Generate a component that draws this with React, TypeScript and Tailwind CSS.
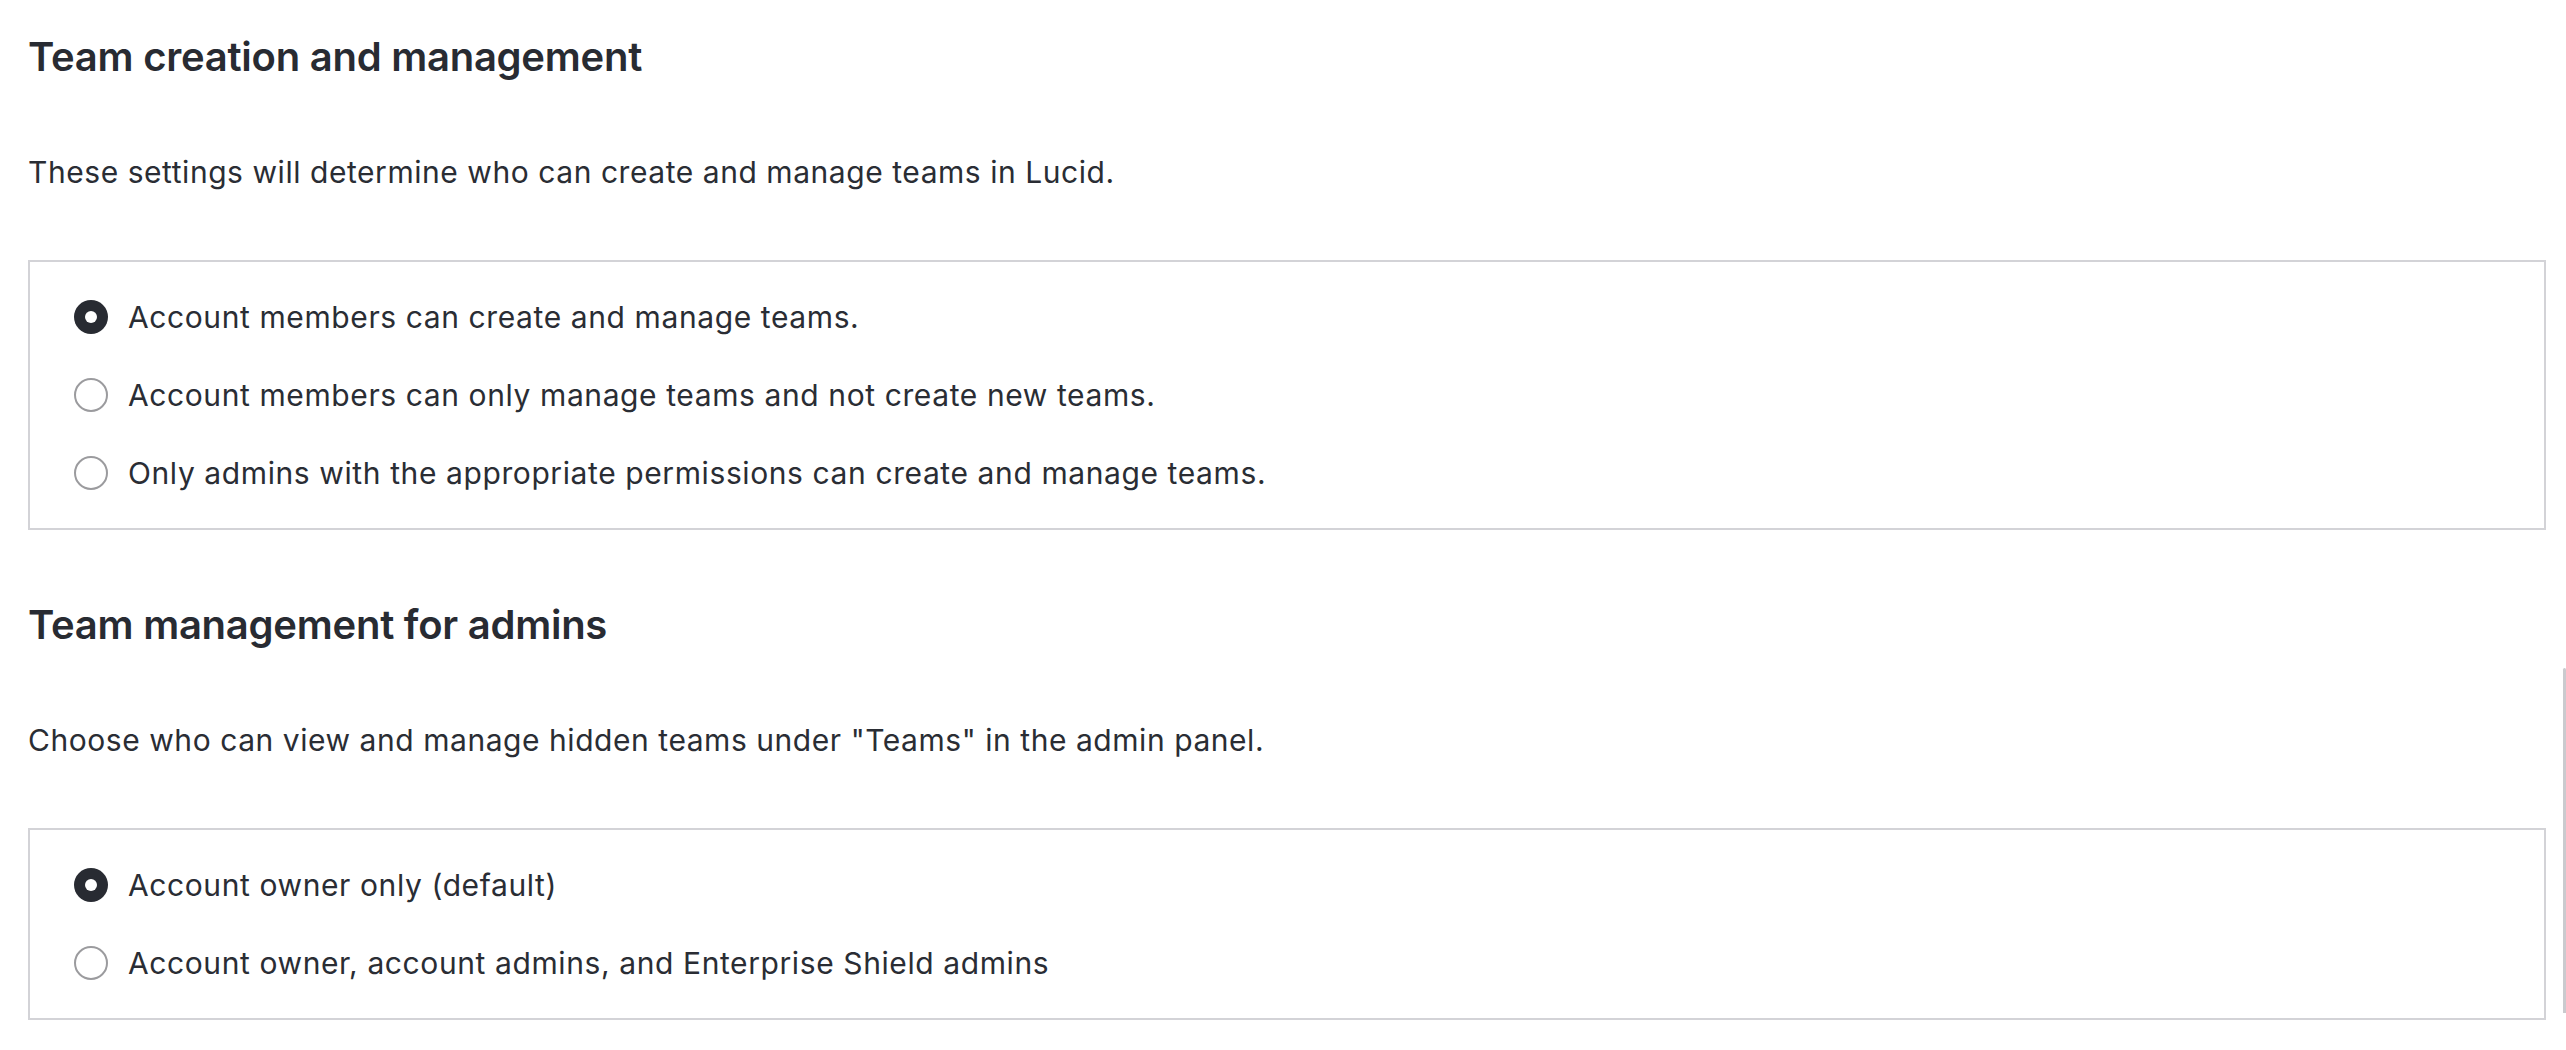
import { useState } from "react";

type Option = { id: string; label: string };

const creationOptions: Option[] = [
  { id: "members-create", label: "Account members can create and manage teams." },
  { id: "members-manage", label: "Account members can only manage teams and not create new teams." },
  { id: "admins-only", label: "Only admins with the appropriate permissions can create and manage teams." },
];

const adminOptions: Option[] = [
  { id: "owner", label: "Account owner only (default)" },
  { id: "owner-admins", label: "Account owner, account admins, and Enterprise Shield admins" },
];

function Radio({ checked }: { checked: boolean }) {
  if (checked) {
    return (
      <span className="flex h-[34px] w-[34px] shrink-0 items-center justify-center rounded-full bg-[#282b32]">
        <span className="h-[12px] w-[12px] rounded-full bg-white" />
      </span>
    );
  }
  return <span className="h-[34px] w-[34px] shrink-0 rounded-full border-2 border-[#9b9b9e] bg-white" />;
}

function RadioGroup({ options, value, onChange }: { options: Option[]; value: string; onChange: (id: string) => void }) {
  return (
    <div className="mb-[71px] mr-[20px] border-2 border-[#d3d3d7] px-[44px] py-[16px]">
      {options.map((o) => (
        <label key={o.id} className="flex h-[78px] cursor-pointer items-center gap-[20px]" onClick={() => onChange(o.id)}>
          <Radio checked={value === o.id} />
          <span className="text-[30px] leading-[36px] tracking-[0.6px] text-[#2a2d34]">{o.label}</span>
        </label>
      ))}
    </div>
  );
}

function Section({
  title,
  description,
  options,
  initial,
}: {
  title: string;
  description: string;
  options: Option[];
  initial: string;
}) {
  const [value, setValue] = useState(initial);
  return (
    <section>
      <h2 className="mb-[73px] text-[40px] font-semibold leading-[48px] tracking-[-0.25px] text-[#282b32]">{title}</h2>
      <p className="mb-[70px] text-[30px] leading-[36px] tracking-[0.55px] text-[#2a2d34]">{description}</p>
      <RadioGroup options={options} value={value} onChange={setValue} />
    </section>
  );
}

export default function App() {
  return (
    <div className="relative h-[1050px] overflow-hidden bg-white pl-[28px] pt-[33px] font-['Inter',sans-serif]">
      <Section
        title="Team creation and management"
        description="These settings will determine who can create and manage teams in Lucid."
        options={creationOptions}
        initial="members-create"
      />
      <Section
        title="Team management for admins"
        description={'Choose who can view and manage hidden teams under "Teams" in the admin panel.'}
        options={adminOptions}
        initial="owner"
      />
      {/* scrollbar thumb edge */}
      <div className="absolute right-0 top-[668px] h-[345px] w-[3px] rounded-t-full bg-[#cacace]" />
    </div>
  );
}
